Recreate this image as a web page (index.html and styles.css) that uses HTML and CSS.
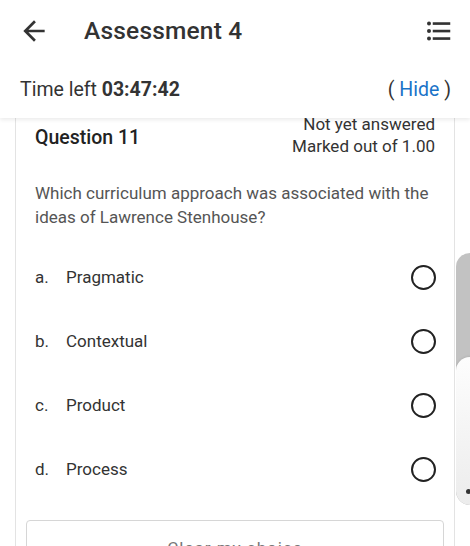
FILE: index.html
```html
<!DOCTYPE html>
<html lang="en">
  <head>
    <meta charset="UTF-8" />
    <meta name="viewport" content="width=device-width, initial-scale=1.0" />
    <title>Assessment 4</title>
    <link rel="stylesheet" href="styles.css">
  </head>
  <body>
    <header class="header">
      <div class="topbar">
        <button class="icon-btn back" aria-label="Back">
          <svg width="32" height="32" viewBox="0 0 24 24">
            <path d="M20 11H7.83l5.59-5.59L12 4l-8 8 8 8 1.41-1.41L7.83 13H20v-2z" fill="#333" />
          </svg>
        </button>
        <h1 class="title">Assessment 4</h1>
        <button class="icon-btn menu" aria-label="Questions">
          <svg width="30" height="30" viewBox="0 0 24 24">
            <circle cx="4" cy="6" r="1.6" fill="#333" />
            <circle cx="4" cy="12" r="1.6" fill="#333" />
            <circle cx="4" cy="18" r="1.6" fill="#333" />
            <rect x="7" y="5" width="14" height="2.1" fill="#333" />
            <rect x="7" y="11" width="14" height="2.1" fill="#333" />
            <rect x="7" y="17" width="14" height="2.1" fill="#333" />
          </svg>
        </button>
      </div>
      <div class="timer">
        <span>Time left <b>03:47:42</b></span>
        <span class="hide">( <a href="#">Hide</a> )</span>
      </div>
    </header>

    <main class="card">
      <div class="q-head">
        <h2 class="q-no">Question 11</h2>
        <div class="q-meta">
          <div>Not yet answered</div>
          <div>Marked out of 1.00</div>
        </div>
      </div>
      <p class="q-text">Which curriculum approach was associated with the ideas of Lawrence Stenhouse?</p>

      <div class="answers">
        <label class="answer">
          <span class="letter">a.</span>
          <span class="label">Pragmatic</span>
          <input type="radio" name="q11" />
        </label>
        <label class="answer">
          <span class="letter">b.</span>
          <span class="label">Contextual</span>
          <input type="radio" name="q11" />
        </label>
        <label class="answer">
          <span class="letter">c.</span>
          <span class="label">Product</span>
          <input type="radio" name="q11" />
        </label>
        <label class="answer">
          <span class="letter">d.</span>
          <span class="label">Process</span>
          <input type="radio" name="q11" />
        </label>
      </div>

      <button class="clear">Clear my choice</button>
    </main>

    <div class="side-tab">
      <div class="side-tab-inner"></div>
    </div>
  </body>
</html>
```

FILE: styles.css
```css
html,
body {
  height: 100%;
}

body {
  font-family: Roboto, "Noto Sans", Arial, sans-serif;
  margin: 0;
  background-color: #fff;
  color: #333;
  overflow: hidden;
}

.header {
  position: relative;
  z-index: 2;
  background-color: #fff;
  box-shadow: 0 2px 4px rgba(0, 0, 0, 0.08);
}

.topbar {
  display: flex;
  align-items: center;
  height: 60px;
  padding: 0 16px 0 18px;
}

.icon-btn {
  display: flex;
  align-items: center;
  justify-content: center;
  background: none;
  border: none;
  padding: 0;
}

.back {
  margin-top: 2px;
}

.title {
  flex: 1;
  margin: 0 0 0 34px;
  font-size: 24.5px;
  font-weight: 500;
  color: #333;
  letter-spacing: 0.2px;
}

.menu {
  margin-top: 2px;
}

.timer {
  display: flex;
  justify-content: space-between;
  align-items: center;
  height: 58px;
  padding: 0 19px 0 20px;
  font-size: 19.5px;
  color: #333;
}

.timer b {
  font-weight: 700;
}

.hide a {
  color: #1a73c8;
  text-decoration: none;
}

.card {
  position: relative;
  z-index: 1;
  margin: -5px 15px 0;
  padding: 0 19px;
  border-left: 1px solid #e3e3e3;
  border-right: 1px solid #e3e3e3;
}

.q-head {
  display: flex;
  justify-content: space-between;
  align-items: center;
}

.q-no {
  margin: 4px 0 0;
  font-size: 19.5px;
  font-weight: 500;
  color: #222;
}

.q-meta {
  text-align: right;
  font-size: 17px;
  line-height: 22px;
  color: #333;
}

.q-text {
  margin: 24px 0 0;
  font-size: 17px;
  line-height: 24px;
  color: #555;
}

.answers {
  margin-top: 16px;
}

.answer {
  display: flex;
  align-items: center;
  height: 64px;
  font-size: 17px;
  color: #333;
}

.letter {
  width: 31px;
}

.label {
  flex: 1;
}

.answer input[type="radio"] {
  appearance: none;
  -webkit-appearance: none;
  margin: 0 -1px 0 0;
  width: 25px;
  height: 25px;
  border: 2px solid #222;
  border-radius: 50%;
  box-sizing: border-box;
}

.clear {
  display: block;
  margin: 19px 0 0 -9px;
  width: calc(100% + 18px);
  height: 48px;
  padding-top: 8px;
  background-color: #fff;
  border: 1px solid #d6d6d6;
  border-radius: 4px;
  font-family: inherit;
  font-size: 17px;
  color: #777;
  letter-spacing: 1px;
}

/* floating drawer handle on the right edge */
.side-tab {
  position: absolute;
  left: 456px;
  top: 253px;
  width: 24px;
  height: 252px;
  border-radius: 14px 0 0 14px;
  background-color: #c2c2c2;
  overflow: hidden;
}

.side-tab-inner {
  position: absolute;
  left: 0;
  top: 104px;
  width: 100%;
  height: 148px;
  border-radius: 14px 0 0 14px;
  background: linear-gradient(#fdfdfd, #ececec);
  box-shadow: 0 0 3px rgba(0, 0, 0, 0.15);
}

.side-tab-inner::after {
  content: "";
  position: absolute;
  left: 10px;
  top: 132px;
  width: 5px;
  height: 5px;
  border-radius: 50%;
  background-color: #333;
}
```
